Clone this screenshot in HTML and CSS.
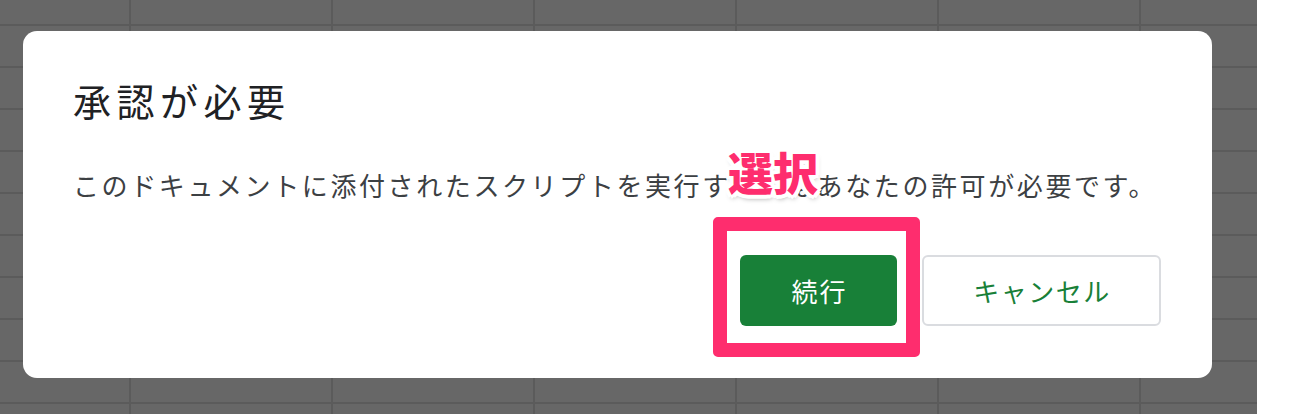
FILE: index.html
```html
<!DOCTYPE html>
<html lang="ja">
<head>
  <meta charset="UTF-8" />
  <meta name="viewport" content="width=device-width, initial-scale=1" />
  <title>承認が必要</title>
  <link rel="stylesheet" href="styles.css">
</head>
<body>
  <div class="sheet">
    <div class="dialog">
      <h1>承認が必要</h1>
      <p class="message">このドキュメントに添付されたスクリプトを実行するにはあなたの許可が必要です。</p>
      <div class="actions">
        <span class="highlight">
          <button class="btn btn-primary">続行</button>
          <span class="mark"></span>
          <span class="mark-label">選択</span>
        </span>
        <button class="btn btn-cancel">キャンセル</button>
      </div>
    </div>
  </div>
</body>
</html>
```

FILE: styles.css
```css
body {
  margin: 0;
  background: #fff;
  font-family: "Noto Sans CJK JP", "Noto Sans", sans-serif;
}
.sheet {
  width: 1257px;
  height: 414px;
  box-sizing: border-box;
  padding: 31px 0 0 23px;
  background-color: #676767;
  background-image:
    linear-gradient(#5b5b5b 2px, transparent 2px),
    linear-gradient(90deg, #5b5b5b 2px, transparent 2px);
  background-size: 202px 42px;
  background-position: 129px 24px;
}
.dialog {
  width: 1189px;
  height: 347px;
  box-sizing: border-box;
  padding: 48px 51px 0 50px;
  background: #fff;
  border-radius: 14px;
}
h1 {
  margin: 0;
  font-size: 38px;
  line-height: 42px;
  font-weight: normal;
  letter-spacing: 5.5px;
  color: #202124;
}
.message {
  margin: 46px 0 0 0;
  font-size: 26px;
  line-height: 36px;
  letter-spacing: 2.6px;
  color: #3c4043;
}
.actions {
  display: flex;
  justify-content: flex-end;
  gap: 25px;
  margin-top: 52px;
}
.highlight {
  position: relative;
  display: flex;
}
.btn {
  height: 71px;
  box-sizing: border-box;
  border-radius: 6px;
  font-family: inherit;
  font-size: 26px;
  padding: 0;
}
.btn-primary {
  width: 157px;
  border: none;
  background: #188038;
  color: #fff;
  letter-spacing: 2px;
  padding-left: 2px;
}
.btn-cancel {
  width: 239px;
  border: 2px solid #dadce0;
  background: #fff;
  color: #188038;
  letter-spacing: 1.5px;
  padding-left: 1px;
}
.mark {
  position: absolute;
  left: -27px;
  top: -38px;
  width: 207px;
  height: 140px;
  box-sizing: border-box;
  border: 14px solid #fe2d6e;
  border-radius: 5px;
}
.mark-label {
  position: absolute;
  left: -12px;
  top: -105px;
  font-size: 45px;
  line-height: 44px;
  font-weight: 900;
  color: #fe2d6e;
  white-space: nowrap;
  text-shadow:
    4px 0 0 #fff, -4px 0 0 #fff, 0 4px 0 #fff, 0 -4px 0 #fff,
    3px 3px 0 #fff, -3px 3px 0 #fff, 3px -3px 0 #fff, -3px -3px 0 #fff,
    1px 4px 5px rgba(0, 0, 0, 0.35);
}
```
